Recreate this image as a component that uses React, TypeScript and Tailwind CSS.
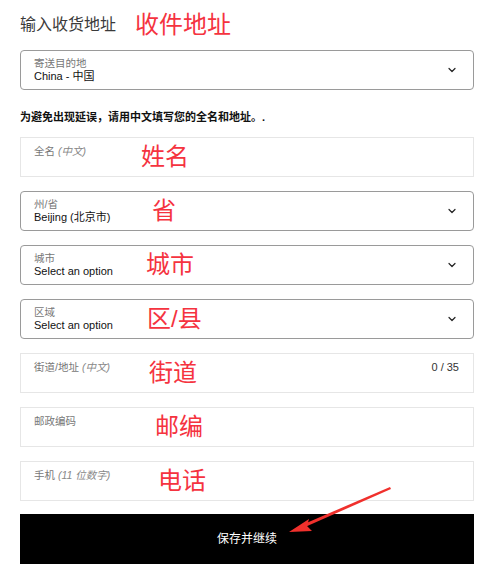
import React from 'react';
import { ChevronDown } from 'lucide-react';

const FONT = "font-['Liberation_Sans','Noto_Sans_CJK_SC',sans-serif]";

type SelectProps = { label: string; value: string; note?: string; noteX?: string };
type InputProps = { label: string; hint?: string; counter?: string; note?: string; noteX?: string };

const Note: React.FC<{ text: string; x: string }> = ({ text, x }) => (
  <span className={`absolute top-1/2 -translate-y-1/2 text-[24px] leading-none text-[#f5333f] ${x}`}>{text}</span>
);

const SelectBox: React.FC<SelectProps> = ({ label, value, note, noteX }) => (
  <div className="relative flex h-[40px] items-center justify-between rounded-[4px] border border-[#9a9a9a] pl-[13px] pr-[15px]">
    <div className="flex flex-col">
      <span className="text-[10.5px] leading-[13px] text-[#777]">{label}</span>
      <span className="text-[11px] leading-[13px] text-[#111]">{value}</span>
    </div>
    <ChevronDown size={12} strokeWidth={2.4} className="text-[#222]" />
    {note && <Note text={note} x={noteX || ''} />}
  </div>
);

const InputBox: React.FC<InputProps> = ({ label, hint, counter, note, noteX }) => (
  <div className="relative flex h-[40px] items-start justify-between border border-[#e6e6e6] pl-[13px] pr-[14px] pt-[7px]">
    <span className="text-[10.5px] leading-[13px] text-[#777]">
      {label}
      {hint && <i className="ml-[3px] text-[#888]">{hint}</i>}
    </span>
    {counter && <span className="text-[11px] leading-[13px] text-[#333]">{counter}</span>}
    {note && <Note text={note} x={noteX || ''} />}
  </div>
);

export default function App() {
  return (
    <div className={`relative h-[571px] w-[492px] bg-white pl-5 pr-[18px] ${FONT}`}>
      <div className="flex h-[50px] items-center">
        <span className="text-[16px] text-[#3a3a3a]">输入收货地址</span>
        <span className="ml-[19px] text-[24px] leading-none text-[#f5333f]">收件地址</span>
      </div>

      <SelectBox label="寄送目的地" value="China - 中国" />

      <p className="mb-[13px] mt-[20px] text-[11px] font-bold leading-[14px] text-[#111]">
        为避免出现延误，请用中文填写您的全名和地址。.
      </p>

      <div className="flex flex-col gap-[14px]">
        <InputBox label="全名" hint="(中文)" note="姓名" noteX="left-[120px]" />
        <SelectBox label="州/省" value="Beijing (北京市)" note="省" noteX="left-[131px]" />
        <SelectBox label="城市" value="Select an option" note="城市" noteX="left-[125px]" />
        <SelectBox label="区域" value="Select an option" note="区/县" noteX="left-[126px]" />
        <InputBox label="街道/地址" hint="(中文)" counter="0 / 35" note="街道" noteX="left-[128px]" />
        <InputBox label="邮政编码" note="邮编" noteX="left-[134px]" />
        <InputBox label="手机" hint="(11 位数字)" note="电话" noteX="left-[137px]" />
      </div>

      <button className="mt-[13px] flex h-[50px] w-full items-center justify-center bg-black text-[12px] text-white">
        保存并继续
      </button>

      {/* 빨간 화살표 */}
      <svg className="pointer-events-none absolute left-0 top-0" width="492" height="571" viewBox="0 0 492 571">
        <polygon points="390,487 391,489 305,527 304,524" fill="#f0302c" />
        <polygon points="289,532 309,519 307,526 312,531" fill="#f0302c" />
      </svg>
    </div>
  );
}
